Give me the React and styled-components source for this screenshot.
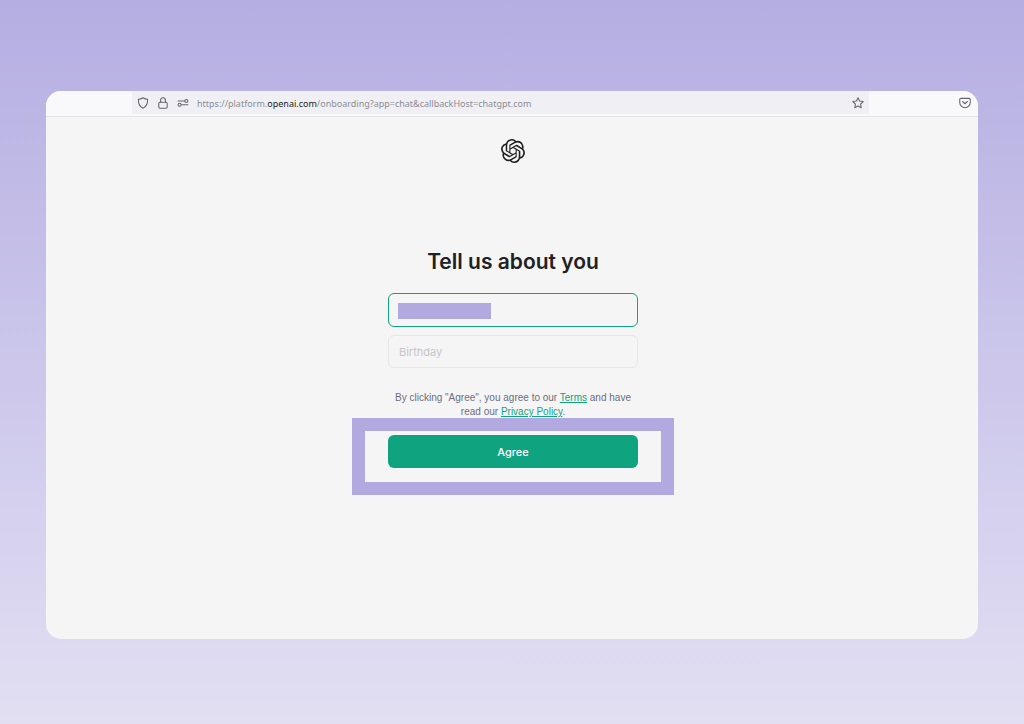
import React from 'react';
import styled, { createGlobalStyle } from 'styled-components';
import { SiOpenai } from 'react-icons/si';

const GlobalStyle = createGlobalStyle`
  * {
    box-sizing: border-box;
  }

  body {
    margin: 0;
    font-family: Inter, "Liberation Sans", sans-serif;
    color: #202123;
  }
`;

function AddressBar() {
  return (
    <BarWrapper>
      <Address>
        <Icon viewBox="0 0 16 16" aria-label="Tracking protection">
          <path d="M8 1C6.3 2.2 4.2 2.9 1.9 3.1 1.5 8.8 3.6 13 8 15 12.4 13 14.5 8.8 14.1 3.1 11.8 2.9 9.7 2.2 8 1Z" />
        </Icon>
        <Icon viewBox="0 0 16 16" aria-label="Secure connection">
          <rect x="2.4" y="7" width="11.2" height="8" rx="1.6" />
          <path d="M4.8 7V4.2a3.2 3.2 0 0 1 6.4 0V7" />
        </Icon>
        <Icon viewBox="0 0 16 16" aria-label="Permissions">
          <path d="M1.5 5.2h8.7M14.5 10.4H6.2" />
          <circle cx="12.5" cy="5.2" r="2" />
          <circle cx="3.5" cy="10.4" r="2" />
        </Icon>
        <Url>https://platform.<b>openai.com</b>/onboarding?app=chat&amp;callbackHost=chatgpt.com</Url>
        <Icon viewBox="0 0 16 16" aria-label="Bookmark">
          <path d="m8 1 2.1 4.4 4.9.6-3.6 3.4.9 4.9L8 12l-4.3 2.3.9-4.9L1 6l4.9-.6Z" />
        </Icon>
      </Address>
      <Icon viewBox="0 0 16 16" aria-label="Save to Pocket">
        <path d="M2.6 1.8h10.8A1.6 1.6 0 0 1 15 3.4v3.8a7 7 0 0 1-14 0V3.4a1.6 1.6 0 0 1 1.6-1.6Z" />
        <path d="m4.8 6 3.2 3 3.2-3" />
      </Icon>
    </BarWrapper>
  )
}

function App() {
  return (
    <Page>
      <GlobalStyle />
      <Browser>
        <AddressBar />
        <Content>
          <Logo aria-label="OpenAI" />
          <Title>Tell us about you</Title>
          <Form onSubmit={(e) => e.preventDefault()}>
            <Field>
              <Input $active type="text" aria-label="Full name" />
              <Redacted />
            </Field>
            <Field>
              <Input type="text" aria-label="Birthday" placeholder="Birthday" />
            </Field>
            <Terms>
              By clicking "Agree", you agree to our <a href="#terms">Terms</a> and have
              read our <a href="#privacy">Privacy Policy</a>.
            </Terms>
            <Highlight>
              <Button type="submit">Agree</Button>
            </Highlight>
          </Form>
        </Content>
      </Browser>
    </Page>
  )
}

const Page = styled.div`
  display: flex;
  min-height: 100vh;
  padding: 91px 46px 85px;
  background: linear-gradient(#b5aee2, #e2dff3);
`;

const Browser = styled.div`
  display: flex;
  flex: 1;
  flex-direction: column;
  overflow: hidden;
  border-radius: 15px;
  background: #f5f5f5;
`;

const BarWrapper = styled.header`
  display: flex;
  align-items: center;
  justify-content: space-between;
  height: 26px;
  padding: 0 7px 2px 86px;
  border-bottom: 1px solid #e4e4e6;
  background: #f9f9fb;
`;

const Address = styled.div`
  display: flex;
  align-items: center;
  gap: 8px;
  flex: 0 1 737px;
  height: 23px;
  padding: 0 5px;
  background: #f0f0f4;
`;

const Icon = styled.svg`
  flex: none;
  width: 12px;
  height: 12px;
  fill: none;
  stroke: #64646c;
  stroke-width: 1.4;
  stroke-linejoin: round;
  stroke-linecap: round;
`;

const Url = styled.span`
  flex: 1;
  padding-top: 1px;
  font-family: "Noto Sans", sans-serif;
  font-size: 9px;
  white-space: nowrap;
  color: #8d8d95;

  b {
    font-weight: 400;
    color: #1c1b22;
  }
`;

const Content = styled.main`
  display: flex;
  flex-direction: column;
  align-items: center;
  padding: 22px 0 24px 2px;
`;

const Logo = styled(SiOpenai)`
  width: 24px;
  height: 24px;
`;

const Title = styled.h1`
  margin: 84px 0 16px;
  font-size: 21px;
  line-height: 30px;
  font-weight: 600;
`;

const Form = styled.form`
  display: flex;
  flex-direction: column;
  align-items: center;
  gap: 8px;
`;

const Field = styled.div`
  position: relative;
  width: 250px;
`;

const Input = styled.input`
  display: block;
  width: 100%;
  height: ${(props) => (props.$active ? '34px' : '33px')};
  padding: 0 10px;
  border: ${(props) => (props.$active ? '1px solid #10a37f' : '1px solid #e6e6e8')};
  border-radius: 6px;
  outline: none;
  background: transparent;
  font-family: inherit;
  font-size: 11px;
  color: #202123;

  &::placeholder {
    color: #c5c5c9;
    opacity: 1;
  }
`;

const Redacted = styled.span`
  position: absolute;
  top: 10px;
  left: 10px;
  width: 93px;
  height: 16px;
  background: #b1a9e0;
`;

const Terms = styled.p`
  width: 250px;
  margin: 15px 0 0;
  font-family: "Liberation Sans", Arial, sans-serif;
  font-size: 10px;
  line-height: 14px;
  text-align: center;
  color: #6e6e80;

  a {
    color: #10a37f;
  }
`;

const Highlight = styled.div`
  width: 322px;
  margin-top: -9px;
  padding: 4px 23px 14px;
  border: 13px solid #b1a9e0;
`;

const Button = styled.button`
  display: block;
  width: 100%;
  height: 33px;
  border: 0;
  border-radius: 6px;
  background: #10a37f;
  font-family: inherit;
  font-size: 11px;
  font-weight: 500;
  color: #fff;
`;

export default App;
